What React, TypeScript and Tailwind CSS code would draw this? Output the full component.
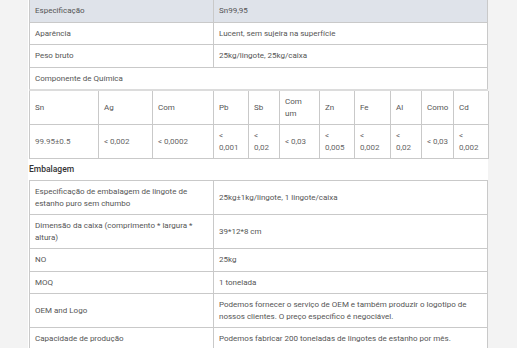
const cell = 'border border-[#c9c9c9] px-[5px] py-[5px] align-middle text-left font-normal'

const chemHeads = [
  { label: 'Sn', w: 'w-[69px]' },
  { label: 'Ag', w: 'w-[54px]' },
  { label: 'Com', w: 'w-[61px]' },
  { label: 'Pb', w: 'w-[35px]' },
  { label: 'Sb', w: 'w-[31px]' },
  { label: 'Com\num', w: 'w-[40px]' },
  { label: 'Zn', w: 'w-[35px]' },
  { label: 'Fe', w: 'w-[36px]' },
  { label: 'Al', w: 'w-[31px]' },
  { label: 'Como', w: 'w-[32px]' },
  { label: 'Cd', w: 'w-[35px]' },
]

// the narrow columns break after "<" in the original
const chemValues = [
  '99.95±0.5',
  '< 0,002',
  '< 0,0002',
  '<\n0,001',
  '<\n0,02',
  '< 0,03',
  '<\n0,005',
  '<\n0,002',
  '<\n0,02',
  '< 0,03',
  '<\n0,002',
]

const packing = [
  ['Especificação de embalagem de lingote de estanho puro sem chumbo', '25kg±1kg/lingote, 1 lingote/caixa'],
  ['Dimensão da caixa (comprimento * largura * altura)', '39*12*8 cm'],
  ['NO', '25kg'],
  ['MOQ', '1 tonelada'],
  ['OEM and Logo', 'Podemos fornecer o serviço de OEM e também produzir o logotipo de nossos clientes. O preço específico é negociável.'],
  ['Capacidade de produção', 'Podemos fabricar 200 toneladas de lingotes de estanho por mês.'],
]

export default function App() {
  return (
    <div className="h-[348px] overflow-hidden bg-[#f3f3f3] font-['Roboto',sans-serif] text-[8px] leading-[11.5px] text-[#555]">
      <div className="ml-[28px] w-[460px] bg-white pl-px">
        <table className="-mt-px w-full table-fixed border-collapse">
          <colgroup>
            <col className="w-[184px]" />
            <col />
          </colgroup>
          <tbody>
            <tr className="bg-[#dfe3ea]">
              <td className={cell}>Especificação</td>
              <td className={cell}>Sn99,95</td>
            </tr>
            <tr>
              <td className={cell}>Aparência</td>
              <td className={cell}>Lucent, sem sujeira na superfície</td>
            </tr>
            <tr>
              <td className={cell}>Peso bruto</td>
              <td className={cell}>25kg/lingote, 25kg/caixa</td>
            </tr>
            <tr>
              <td className={`${cell} border-b-2 border-b-[#dcdcdc]`} colSpan={2}>
                Componente de Química
              </td>
            </tr>
          </tbody>
        </table>

        <table className="w-full table-fixed border-collapse">
          <thead>
            <tr>
              {chemHeads.map((h) => (
                <th key={h.label} className={`${cell} ${h.w} whitespace-pre-line border-t-0 pr-[2px]`}>
                  {h.label}
                </th>
              ))}
            </tr>
          </thead>
          <tbody>
            <tr>
              {chemValues.map((v, i) => (
                <td key={i} className={`${cell} whitespace-pre-line pr-[2px] text-[#666]`}>
                  {v}
                </td>
              ))}
            </tr>
          </tbody>
        </table>

        <h3 className="flex h-[21px] items-center text-[8.5px] font-medium text-[#333]">Embalagem</h3>

        <table className="w-full table-fixed border-collapse">
          <colgroup>
            <col className="w-[184px]" />
            <col />
          </colgroup>
          <tbody>
            {packing.map(([k, v]) => (
              <tr key={k}>
                <td className={`${cell} pr-[14px]`}>{k}</td>
                <td className={`${cell} pr-[14px]`}>{v}</td>
              </tr>
            ))}
          </tbody>
        </table>
      </div>
    </div>
  )
}
